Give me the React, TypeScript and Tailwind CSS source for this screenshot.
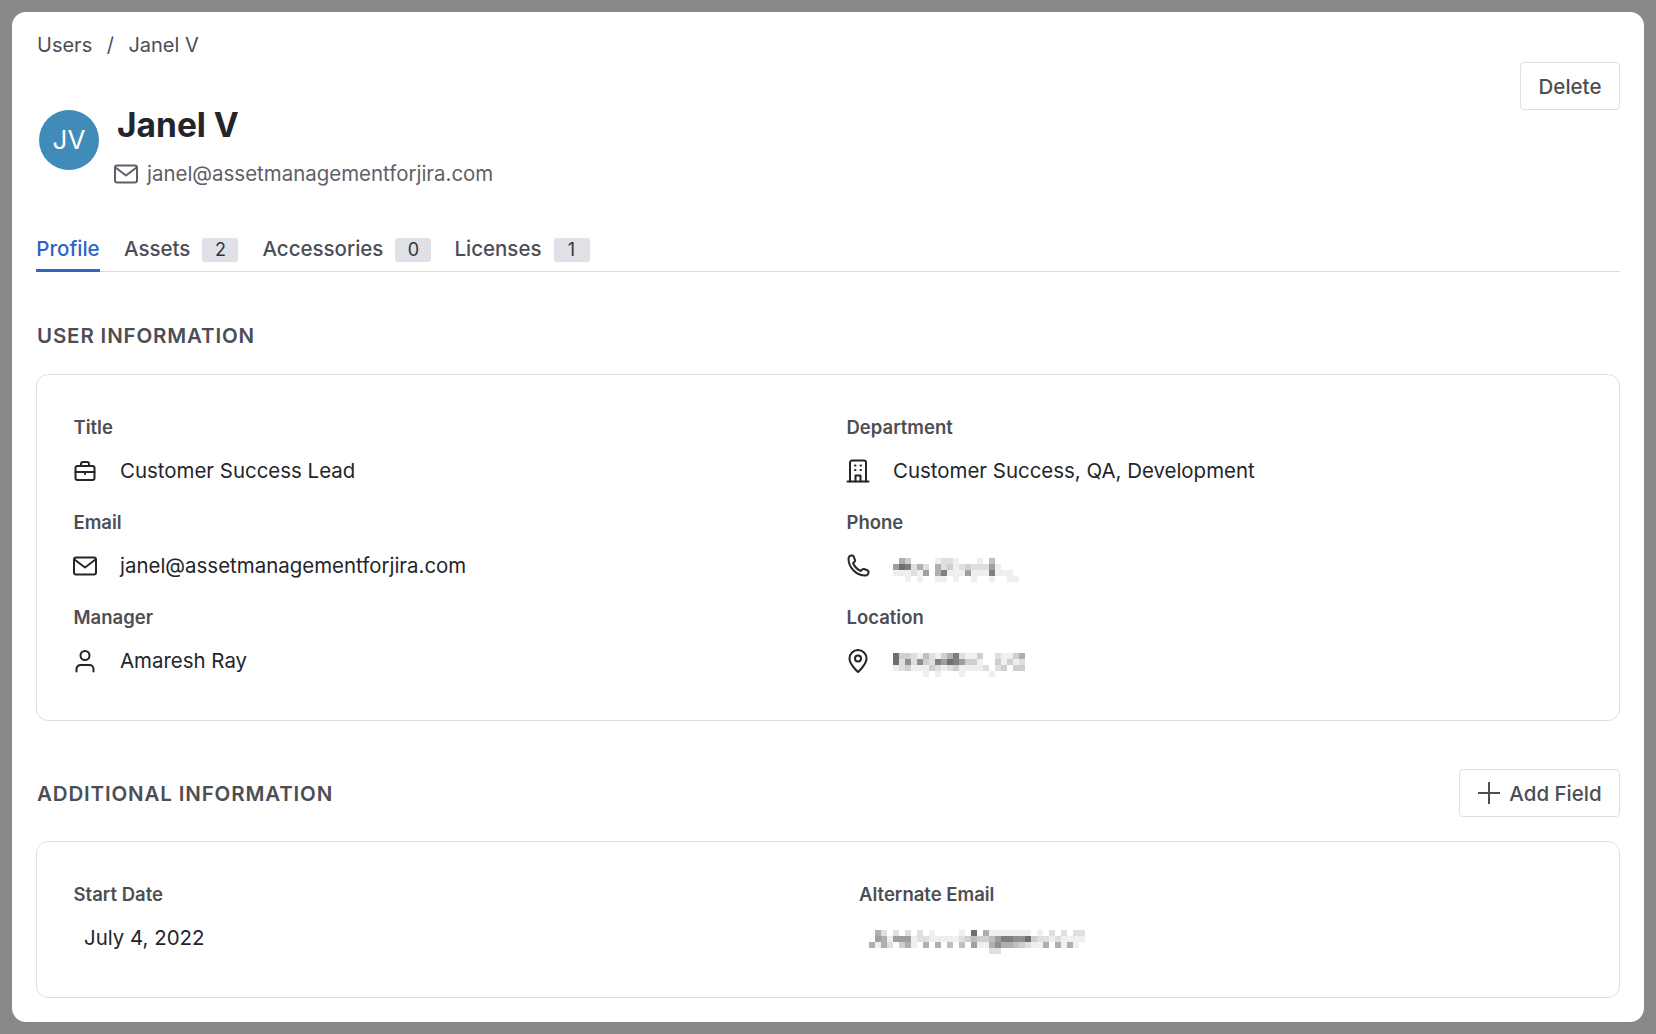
import React from 'react';

// Pixelated (redacted) text, one hex digit per 6px cell: 0 = white, f = dark
const Redacted = ({ rows, className }: { rows: string[]; className?: string }) => (
  <svg width={rows[0].length * 6} height={rows.length * 6} className={className}>
    {rows.map((row, y) =>
      row.split('').map((c, x) => {
        const d = parseInt(c, 16);
        if (!d) return null;
        const v = 255 - d * 16;
        return <rect key={`${x}-${y}`} x={x * 6} y={y * 6} width={6} height={6} fill={`rgb(${v},${v},${v})`} />;
      })
    )}
  </svg>
);

const phoneRows = [
  '053000012210001040000',
  '698252052312322261000',
  '111216058111611181110',
  '001010011010010010011',
];
const locationRows = [
  '9332142135821130021135',
  '9272732869863310031312',
  '1231113212311112023033',
  '0000010100010000100000',
];
const altEmailRows = [
  '0520202020100001090511111110102020220',
  '0651666122111112343346887793221211110',
  '5152035105050404061157554321150515100',
  '0000000000000000000022000000000000000',
];

const IconBase = ({ children, className }: { children: React.ReactNode; className?: string }) => (
  <svg viewBox="0 0 24 24" fill="none" stroke="currentColor" strokeWidth={2} strokeLinecap="round" strokeLinejoin="round" className={className}>
    {children}
  </svg>
);

const MailIcon = ({ className }: { className?: string }) => (
  <IconBase className={className}>
    <rect x="1" y="3.5" width="22" height="17" rx="2" />
    <path d="M1.500 5.500l10.500 8 10.500-8" />
  </IconBase>
);
const BriefcaseIcon = ({ className }: { className?: string }) => (
  <IconBase className={className}>
    <rect x="2.5" y="7" width="19" height="14" rx="2" />
    <path d="M8 7V5a2 2 0 0 1 2-2h4a2 2 0 0 1 2 2v2" />
    <path d="M2.5 13h19" />
    <path d="M12 13v2" />
  </IconBase>
);
const BuildingIcon = ({ className }: { className?: string }) => (
  <IconBase className={className}>
    <path d="M1.5 22.5h21" />
    <path d="M4 22.5V3.5a2 2 0 0 1 2-2h12a2 2 0 0 1 2 2v19" />
    <path d="M9.5 22.5v-6h5v6" />
    <path d="M9 6.5h.5M14.5 6.5h.5M9 11h.5M14.5 11h.5" />
  </IconBase>
);
const PhoneIcon = ({ className }: { className?: string }) => (
  <IconBase className={className}>
    <path d="M2.5 4.5c0-1.600 1.400-3 3-3h.8c.7 0 1.300.4 1.500 1.100l1.200 3.400c.2.6 0 1.200-.4 1.600L7 9.200c1.600 3.400 4.400 6.200 7.800 7.800l1.600-1.600c.4-.4 1-.6 1.600-.4l3.400 1.200c.7.2 1.100.8 1.100 1.500v.8c0 1.600-1.400 3-3 3C10.300 21.500 2.500 13.700 2.500 4.500z" />
  </IconBase>
);
const UserIcon = ({ className }: { className?: string }) => (
  <IconBase className={className}>
    <circle cx="12" cy="6.500" r="4.500" />
    <path d="M3.500 22.500V20a4 4 0 0 1 4-4h9a4 4 0 0 1 4 4v2.500" />
  </IconBase>
);
const PinIcon = ({ className }: { className?: string }) => (
  <IconBase className={className}>
    <path d="M12 23s8.500-7.500 8.500-13.500a8.500 8.500 0 0 0-17 0C3.500 15.500 12 23 12 23z" />
    <circle cx="12" cy="9.500" r="3" />
  </IconBase>
);

const Field = ({ label, icon, children }: { label: string; icon: React.ReactNode; children: React.ReactNode }) => (
  <div className="h-[95px]">
    <div className="ml-[0.5px] text-[18.5px] leading-[24px] font-semibold text-[#4d4e54]">{label}</div>
    <div className="mt-[14px] flex h-[36px] items-center">
      <div className="flex w-[47px] shrink-0 items-center">{icon}</div>
      <div className="text-[20.450px] text-[#24252a]">{children}</div>
    </div>
  </div>
);

const Tab = ({ label, count, className }: { label: string; count: string; className?: string }) => (
  <div className={`flex h-[40px] items-center ${className ?? ''}`}>
    <span className="-mt-[4px] text-[20.500px] font-medium text-[#4d4e54]">{label}</span>
    <span className="-mt-[3px] ml-[12px] flex h-[24px] w-[36px] items-center justify-center rounded-[3px] bg-[#dfe1e6] text-[18px] text-[#33343a]">{count}</span>
  </div>
);

const iconCls = 'size-[24px] text-[#24252a]';

export default function App() {
  return (
    <div className="h-[1034px] bg-[#888888] p-[12px] font-['Inter',sans-serif]">
      <div className="h-[1010px] rounded-[14px] bg-white px-[24px] pt-[19px]">
        <div className="ml-[1px] flex items-center text-[20px] leading-[28px] text-[#4d4e54]">
          <span>Users</span>
          <span className="mx-[14.5px]">/</span>
          <span>Janel V</span>
        </div>

        <div className="flex items-start justify-between">
          <div className="mt-[51px] flex pl-[3px]">
            <div className="flex size-[60px] items-center justify-center rounded-full bg-[#418bb9] pb-[2px] text-[26px] text-white">JV</div>
            <div className="ml-[15px] -mt-[6px]">
              <div className="ml-[3px] text-[33.500px] leading-[42px] font-bold text-[#24252a]">Janel V</div>
              <div className="mt-[10px] flex items-center text-[#5e6068]">
                <MailIcon className="size-[24px]" />
                <span className="ml-[9px] text-[20.450px] leading-[36px]">janel@assetmanagementforjira.com</span>
              </div>
            </div>
          </div>
          <button className="mt-[3px] flex h-[48px] w-[100px] items-center justify-center rounded-[4px] border border-[#dfdfe1] pt-[2px] text-[20.500px] font-medium text-[#4d4e54]">Delete</button>
        </div>

        <div className="mt-[39px] flex gap-[24px] border-b border-[#d9dbde]">
          <div className="-mb-px flex h-[41px] w-[64px] items-center justify-center border-b-[3px] border-[#2f63c7] pb-[2px] text-[20.500px] font-medium text-[#2f63c7]">Profile</div>
          <Tab label="Assets" count="2" />
          <Tab label="Accessories" count="0" />
          <Tab label="Licenses" count="1" className="-ml-[1px]" />
        </div>

        <h2 className="mt-[50px] ml-[1px] text-[20.500px] leading-[28px] font-semibold tracking-[0.85px] text-[#4d4e54]">USER INFORMATION</h2>

        <div className="mt-[24px] grid h-[347px] grid-cols-2 rounded-[12px] border border-[#dfdfe1] pt-[40px] pl-[36px]">
          <div>
            <Field label="Title" icon={<BriefcaseIcon className={iconCls} />}>Customer Success Lead</Field>
            <Field label="Email" icon={<MailIcon className={iconCls} />}>janel@assetmanagementforjira.com</Field>
            <Field label="Manager" icon={<UserIcon className={iconCls} />}>Amaresh Ray</Field>
          </div>
          <div>
            <Field label="Department" icon={<BuildingIcon className={iconCls} />}>Customer Success, QA, Development</Field>
            <Field label="Phone" icon={<PhoneIcon className={iconCls} />}><Redacted rows={phoneRows} className="mt-[8px]" /></Field>
            <Field label="Location" icon={<PinIcon className={iconCls} />}><Redacted rows={locationRows} className="mt-[8px]" /></Field>
          </div>
        </div>

        <div className="mt-[48px] flex h-[48px] items-center justify-between">
          <h2 className="ml-[1px] pt-[1px] text-[20.500px] leading-[28px] font-semibold tracking-[0.85px] text-[#4d4e54]">ADDITIONAL INFORMATION</h2>
          <button className="flex h-[48px] w-[161px] items-center justify-center rounded-[4px] border border-[#dfdfe1] pt-[2px] text-[20.500px] font-medium text-[#4d4e54]">
            <svg viewBox="0 0 24 24" fill="none" stroke="currentColor" strokeWidth={2} className="mr-[8px] -mt-[2px] size-[24px]">
              <path d="M12 1v22M1 12h22" />
            </svg>
            Add Field
          </button>
        </div>

        <div className="mt-[24px] grid h-[157px] grid-cols-2 rounded-[12px] border border-[#dfdfe1] pt-[40px] pl-[36px]">
          <div>
            <div className="ml-[0.5px] text-[18.5px] leading-[24px] font-semibold text-[#4d4e54]">Start Date</div>
            <div className="mt-[14px] flex h-[36px] items-center pl-[11px] text-[20.450px] text-[#24252a]">July 4, 2022</div>
          </div>
          <div className="ml-[13px]">
            <div className="text-[18.5px] leading-[24px] font-semibold text-[#4d4e54]">Alternate Email</div>
            <div className="mt-[14px] flex h-[36px] items-center pt-[8px] pl-[10px]"><Redacted rows={altEmailRows} /></div>
          </div>
        </div>
      </div>
    </div>
  );
}
